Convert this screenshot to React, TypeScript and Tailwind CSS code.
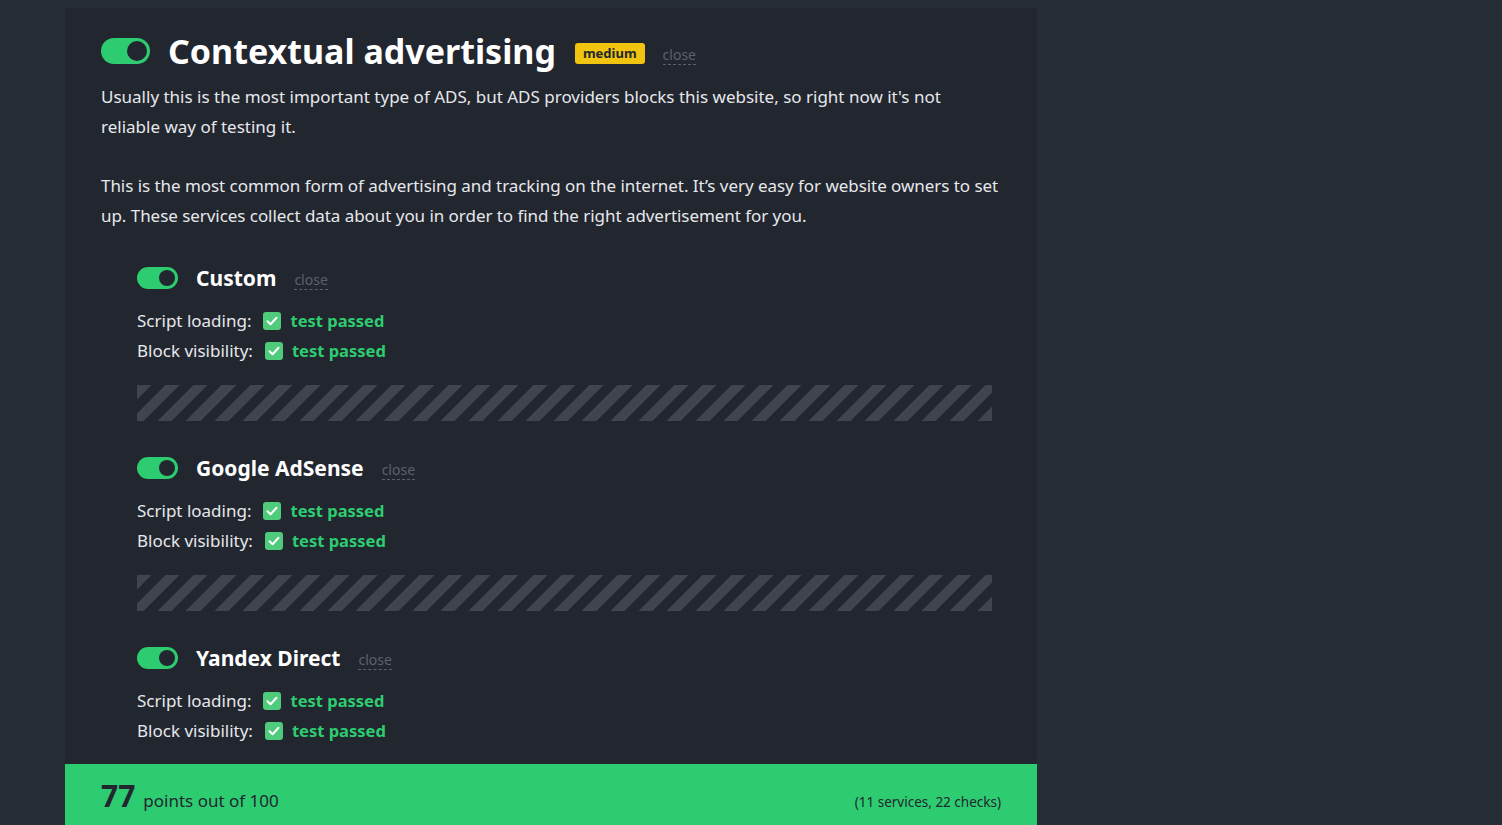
import React from 'react';

interface Service {
  name: string;
}

const services: Service[] = [
  { name: 'Custom' },
  { name: 'Google AdSense' },
  { name: 'Yandex Direct' },
];

function Toggle({ size = 'md' }: { size?: 'md' | 'sm' }) {
  const big = size === 'md';
  return (
    <div
      className={
        big
          ? 'flex h-[26px] w-[49px] shrink-0 items-center justify-end rounded-full bg-[#2ecc71] pr-[3px]'
          : 'flex h-[22px] w-[41px] shrink-0 items-center justify-end rounded-full bg-[#2ecc71] pr-[3px]'
      }
    >
      <div
        className={
          big
            ? 'h-[20px] w-[20px] rounded-full bg-[#22262f]'
            : 'h-[16px] w-[16px] rounded-full bg-[#22262f]'
        }
      />
    </div>
  );
}

function CloseLink() {
  return (
    <span className="border-b border-dashed border-[#5b616b] text-[14px] leading-[16px] text-[#5b616b]">
      close
    </span>
  );
}

function CheckIcon() {
  return (
    <svg width="18" height="18" viewBox="0 0 18 18" className="shrink-0">
      <rect x="0" y="0" width="18" height="18" rx="3" fill="#4fcb7c" />
      <path d="M4.5 9.3 L7.6 12.2 L13.5 5.8" fill="none" stroke="#fff" strokeWidth="2" strokeLinecap="round" strokeLinejoin="round" />
    </svg>
  );
}

function CheckRow({ label }: { label: string }) {
  return (
    <div className="flex h-[30px] items-center text-[17px] text-[#e6e8eb]">
      <span>{label}:</span>
      <span className="ml-[12px]">
        <CheckIcon />
      </span>
      <span className="ml-[9px] text-[16.5px] font-bold text-[#2ecc71]">test passed</span>
    </div>
  );
}

function ServiceBlock({ service, last }: { service: Service; last: boolean }) {
  return (
    <div className="flex flex-col">
      <div className="flex h-[40px] items-center">
        <Toggle size="sm" />
        <span className="ml-[18px] mt-[2px] text-[21px] font-bold text-white">{service.name}</span>
        <span className="ml-[18px] mt-[2px]">
          <CloseLink />
        </span>
      </div>
      <div className="mt-[8px] flex flex-col">
        <CheckRow label="Script loading" />
        <CheckRow label="Block visibility" />
      </div>
      {!last && (
        <div className="mb-[27px] mt-[19px] h-[36px] w-[855px] bg-[repeating-linear-gradient(-45deg,#40444c_0px,#40444c_10px,transparent_10px,transparent_20px)]" />
      )}
    </div>
  );
}

export default function App() {
  return (
    <div className="min-h-screen bg-[#262d36] pt-[8px] font-['Noto_Sans',sans-serif]">
      <div className="ml-[65px] flex w-[972px] flex-col bg-[#22262f]">
        <div className="px-[36px] pt-[21px]">
          <div className="flex h-[44px] items-center">
            <Toggle />
            <h1 className="ml-[18px] text-[34px] font-bold leading-none text-white">
              Contextual advertising
            </h1>
            <span className="ml-[19px] mt-[4px] rounded-[3px] bg-[#f1c40f] px-[8px] py-[2px] text-[13px] font-bold leading-[17px] text-[#22262f]">
              medium
            </span>
            <span className="ml-[18px] mt-[6px]">
              <CloseLink />
            </span>
          </div>
          <div className="mt-[9px] text-[17px] leading-[30px] text-[#e6e8eb]">
            <p>
              Usually this is the most important type of ADS, but ADS providers blocks this website, so right now it's not
              reliable way of testing it.
            </p>
            <p className="mt-[29px] w-[912px] tracking-[-0.05px]">
              This is the most common form of advertising and tracking on the internet. It’s very easy for website owners to set
              up. These services collect data about you in order to find the right advertisement for you.
            </p>
          </div>
          <div className="ml-[36px] mt-[27px] flex flex-col pb-[18px]">
            {services.map((s, i) => (
              <ServiceBlock key={s.name} service={s} last={i === services.length - 1} />
            ))}
          </div>
        </div>
        <div className="flex h-[72px] items-center justify-between bg-[#2ecc71] px-[36px] text-[#22262f]">
          <div className="mb-[9px] flex items-baseline gap-[8px]">
            <span className="text-[30px] font-bold">77</span>
            <span className="text-[17px]">points out of 100</span>
          </div>
          <span className="mt-[4px] text-[13.5px]">(11 services, 22 checks)</span>
        </div>
      </div>
    </div>
  );
}
